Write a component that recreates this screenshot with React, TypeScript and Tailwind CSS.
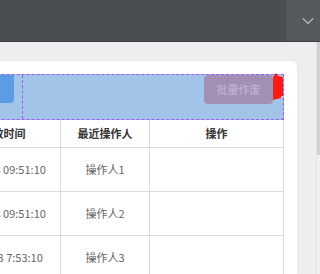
import React from 'react';
import { ChevronDown } from 'lucide-react';

const rows = [
  { time: '2023-08-08 09:51:10', user: '操作人1' },
  { time: '2023-08-08 09:51:10', user: '操作人2' },
  { time: '2023-08-03 7:53:10', user: '操作人3' },
];

const cell = 'flex items-center justify-center border-r border-[#dcdcdc] whitespace-nowrap';

const App: React.FC = () => {
  return (
    <div
      className="w-[320px] h-[274px] overflow-hidden flex flex-col bg-[#edeef0]"
      style={{ fontFamily: '"Noto Sans CJK SC", "Noto Sans", sans-serif' }}
    >
      {/* top bar */}
      <div className="h-[41px] shrink-0 flex bg-[#4a4e52]">
        <div className="flex-1" />
        <div className="w-[34px] bg-[#55585c] flex items-center justify-end pr-[2px]">
          <ChevronDown size={20} strokeWidth={1.4} className="text-[#b2b5b8]" />
        </div>
      </div>
      <div className="h-px shrink-0 bg-[#3e4144]" />

      <div className="flex-1 flex min-h-0">
        <div className="flex-1 flex justify-end pt-[19px] pr-[19px] overflow-hidden">
          <div className="w-[400px] shrink-0 bg-white rounded-tr-[5px] shadow-[0_0_3px_rgba(0,0,0,0.06)] pt-[13px] pr-[13px]">
            {/* selected toolbar */}
            <div className="h-[46px] flex items-start bg-[#a1c4e8] border border-dashed border-[#9c5cf5]">
              <div className="w-[116px] h-[28px] bg-[#5b9ce3] rounded-br-[4px] shrink-0" />
              <div className="w-[8px] shrink-0" />
              <div className="self-stretch border-l border-dashed border-[#9c5cf5]" />
              <div className="flex-1" />
              <button className="h-[29px] w-[69px] rounded-[4px] bg-[#a48fb4] text-[#c4b6d6] text-[11px] flex items-center justify-center">
                批量作废
              </button>
              <svg width="10" height="28" viewBox="0 0 10 28" className="-mt-[2px] shrink-0">
                <path d="M0 4 L3 0 L5 3 L10 4 L10 23 L8 23 L8 25 L0 27 Z" fill="#ff1a0d" />
              </svg>
            </div>

            {/* table */}
            <div className="text-[11px]">
              <div className="grid grid-cols-[42px_122px_89px_134px] h-[28px] border-b border-[#dcdcdc] font-bold text-[#333]">
                <div className={cell} />
                <div className={`${cell} pl-[8px]`}>生效时间</div>
                <div className={cell}>最近操作人</div>
                <div className={cell}>操作</div>
              </div>
              {rows.map((r) => (
                <div
                  key={r.user}
                  className="grid grid-cols-[42px_122px_89px_134px] h-[44px] border-b border-[#dcdcdc] text-[#666]"
                >
                  <div className={cell} />
                  <div className={`${cell} pr-[9px]`}>{r.time}</div>
                  <div className={cell}>{r.user}</div>
                  <div className={cell} />
                </div>
              ))}
            </div>
          </div>
        </div>

        {/* scrollbar */}
        <div className="w-[4px] shrink-0 bg-[#eef0f2] border-l border-[#e2e3e5] flex flex-col">
          <div className="h-[113px] bg-[#d0d1d3]" />
        </div>
      </div>
    </div>
  );
};

export default App;
